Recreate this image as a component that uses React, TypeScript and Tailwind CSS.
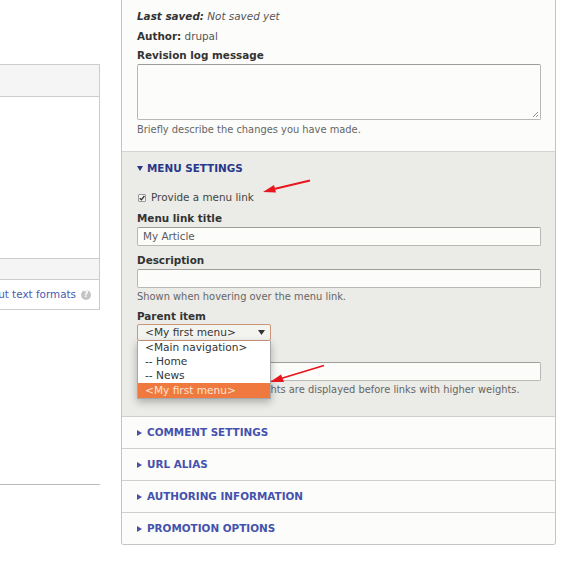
import React from 'react';

const font = "font-['DejaVu_Sans',sans-serif]";

/** Small collapsed/expanded triangle used by the details summaries. */
const Caret = ({ open }: { open?: boolean }) =>
    open ? (
        <svg width="6" height="5" viewBox="0 0 6 5" className="shrink-0">
            <path d="M0 0 L6 0 L3 5 Z" fill="currentColor" />
        </svg>
    ) : (
        <svg width="5" height="6" viewBox="0 0 5 6" className="shrink-0">
            <path d="M0 0 L5 3 L0 6 Z" fill="currentColor" />
        </svg>
    );

const CollapsedSection = ({ title }: { title: string }) => (
    <div className="h-[32px] border-t border-[#cfcfcb] bg-[#fcfcfa] flex items-center gap-[5px] pl-[15px] text-[#4452ad] text-[10.4px] font-bold uppercase">
        <Caret />
        <span>{title}</span>
    </div>
);

const TextInput = ({ value }: { value?: string }) => (
    <div className="h-[19px] w-[404px] border border-[#b8b8b4] border-t-[#9d9d9a] bg-[#fcfcfa] rounded-[2px] flex items-center pl-[5px] text-[10.4px] text-[#5a5a5a]">
        {value}
    </div>
);

const Label = ({ children }: { children: React.ReactNode }) => (
    <div className="h-[13px] leading-[13px] text-[10.4px] font-bold text-[#333]">{children}</div>
);

const Description = ({ children }: { children: React.ReactNode }) => (
    <div className="h-[12px] leading-[12px] text-[9.9px] text-[#666] whitespace-nowrap">{children}</div>
);

export default function App() {
    return (
        <div className={`${font} relative w-[573px] h-[562px] bg-white overflow-hidden flex`}>
            {/* left column */}
            <div className="w-[100px] shrink-0 pt-[64px]">
                <div className="border-y border-r border-[#cccccc]">
                    <div className="h-[32px] bg-[#f5f5f5] border-b border-[#cccccc]" />
                    <div className="h-[161px] bg-white" />
                    <div className="h-[21px] bg-[#f5f5f5] border-t border-[#cccccc]" />
                    <div className="h-[30px] border-t border-[#cccccc] flex items-center justify-end pr-[8px] overflow-hidden">
                        <span className="text-[10.4px] text-[#4a5ab0] whitespace-nowrap">About text formats</span>
                        <span className="ml-[5px] w-[10px] h-[10px] rounded-full bg-[#c4c4c4] text-white text-[8px] font-bold leading-[10px] text-center shrink-0">?</span>
                    </div>
                </div>
                <div className="mt-[174px] border-t border-[#bbbbbb]" />
            </div>

            {/* right column */}
            <div className="ml-[21px] w-[435px] shrink-0">
                <div className="border-x border-b border-[#c4c4c0] rounded-b-[3px] overflow-hidden">
                    {/* revision info */}
                    <div className="h-[151px] bg-[#fcfcfa] pl-[15px] pt-[10px]">
                        <div className="h-[13px] leading-[13px] text-[10.4px] italic text-[#555]">
                            <span className="font-bold text-[#333]">Last saved:</span> Not saved yet
                        </div>
                        <div className="mt-[7px] h-[13px] leading-[13px] text-[10.4px] text-[#555]">
                            <span className="font-bold text-[#333]">Author:</span> drupal
                        </div>
                        <div className="mt-[6px]">
                            <Label>Revision log message</Label>
                        </div>
                        <div className="mt-[2px] relative h-[56px] w-[404px] border border-[#b8b8b4] border-t-[#9d9d9a] bg-[#fcfcfa] rounded-[2px]">
                            <svg width="7" height="7" viewBox="0 0 7 7" className="absolute right-[1px] bottom-[1px]">
                                <path d="M1 6 L6 1 M4 6 L6 4" stroke="#777" strokeWidth="0.8" />
                            </svg>
                        </div>
                        <div className="mt-[4px]">
                            <Description>Briefly describe the changes you have made.</Description>
                        </div>
                    </div>

                    {/* menu settings */}
                    <div className="bg-[#ebebe7] border-t border-[#d4d4d0] pl-[15px] pb-[20px]">
                        <div className="h-[33px] flex items-center gap-[4px] text-[#27388a] text-[10.4px] font-bold uppercase">
                            <Caret open />
                            <span>Menu settings</span>
                        </div>
                        <div className="mt-[6px] h-[13px] flex items-center gap-[5px] text-[10.4px] text-[#444]">
                            <span className="ml-[1px] w-[8px] h-[8px] border border-[#9a9a9a] bg-[#f4f4f4] rounded-[1px] flex items-center justify-center">
                                <svg width="6" height="6" viewBox="0 0 6 6">
                                    <path d="M0.8 3.2 L2.4 4.8 L5.4 1" stroke="#333" strokeWidth="1.3" fill="none" />
                                </svg>
                            </span>
                            <span>Provide a menu link</span>
                        </div>
                        <div className="mt-[8px]">
                            <Label>Menu link title</Label>
                        </div>
                        <div className="mt-[2px]">
                            <TextInput value="My Article" />
                        </div>
                        <div className="mt-[8px]">
                            <Label>Description</Label>
                        </div>
                        <div className="mt-[2px]">
                            <TextInput />
                        </div>
                        <div className="mt-[3px]">
                            <Description>Shown when hovering over the menu link.</Description>
                        </div>
                        <div className="mt-[7px]">
                            <Label>Parent item</Label>
                        </div>
                        <div className="mt-[1px] relative w-[134px]">
                            <div className="h-[17px] w-[134px] border border-[#c9967a] bg-[#f3f3f0] rounded-[2px] flex items-center justify-between pl-[7px] pr-[5px] text-[10.6px] text-[#333]">
                                <span>&lt;My first menu&gt;</span>
                                <svg width="7" height="5" viewBox="0 0 7 5">
                                    <path d="M0 0 L7 0 L3.5 5 Z" fill="#333" />
                                </svg>
                            </div>
                            {/* open dropdown list */}
                            <div className="absolute left-0 top-[17px] z-10 w-[134px] bg-white border-x border-b border-[#a8a8a8] shadow-[0_3px_8px_rgba(0,0,0,0.28)] text-[10.6px] text-[#333]">
                                <div className="h-[14px] leading-[13px] pl-[7px]">&lt;Main navigation&gt;</div>
                                <div className="h-[14px] leading-[13px] pl-[7px]">-- Home</div>
                                <div className="h-[14px] leading-[13px] pl-[7px]">-- News</div>
                                <div className="h-[15px] leading-[15px] pl-[7px] bg-[#f0793f] text-[#fde4d6]">&lt;My first menu&gt;</div>
                            </div>
                        </div>
                        <div className="mt-[3px]">
                            <Label>Weight</Label>
                        </div>
                        <div className="mt-[5px]">
                            <TextInput />
                        </div>
                        <div className="mt-[3px]">
                            <Description>Menu links with lower weights are displayed before links with higher weights.</Description>
                        </div>
                    </div>

                    <CollapsedSection title="Comment settings" />
                    <CollapsedSection title="URL alias" />
                    <CollapsedSection title="Authoring information" />
                    <CollapsedSection title="Promotion options" />
                </div>
            </div>

            {/* red annotation arrows */}
            <svg width="573" height="562" className="absolute left-0 top-0 pointer-events-none z-20">
                <line x1="310" y1="180.5" x2="272" y2="189.5" stroke="#e8161e" strokeWidth="1.8" />
                <path d="M263 192 L274 185 L276 192.5 Z" fill="#e8161e" />
                <line x1="324" y1="365.5" x2="281" y2="378.5" stroke="#e8161e" strokeWidth="1.8" />
                <path d="M270 382 L281 374.5 L284 382 Z" fill="#e8161e" />
            </svg>
        </div>
    );
}
